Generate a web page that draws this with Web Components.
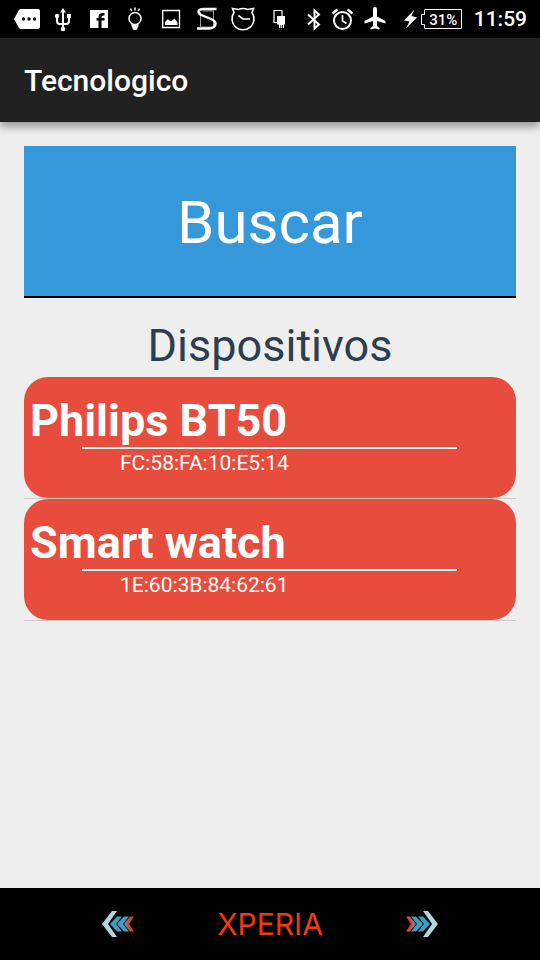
<!DOCTYPE html>
<html lang="es">
<head>
<meta charset="utf-8">
<meta name="viewport" content="width=device-width, initial-scale=1">
<title>Tecnologico</title>
<style>
  body { margin: 0; font-family: Roboto, "Liberation Sans", sans-serif; background: #eeeeee; }
</style>
</head>
<body>
<phone-screen>
  <status-bar slot="status" battery="31%" time="11:59"></status-bar>
  <app-bar slot="header">Tecnologico</app-bar>
  <search-button>Buscar</search-button>
  <device-list heading="Dispositivos">
    <device-card name="Philips BT50" address="FC:58:FA:10:E5:14"></device-card>
    <device-card name="Smart watch" address="1E:60:3B:84:62:61"></device-card>
  </device-list>
  <brand-bar slot="footer">XPERIA</brand-bar>
</phone-screen>

<script>
class BaseElement extends HTMLElement {
  connectedCallback() {
    if (this.shadowRoot) return;
    this.attachShadow({ mode: "open" }).innerHTML = this.render();
  }
}

class PhoneScreen extends BaseElement {
  render() {
    return `
      <style>
        :host { display: flex; flex-direction: column; min-height: 100vh; background: #eeeeee; }
        main { flex: 1; padding: 24px; display: flex; flex-direction: column; gap: 21px; }
      </style>
      <slot name="status"></slot>
      <slot name="header"></slot>
      <main><slot></slot></main>
      <slot name="footer"></slot>`;
  }
}

class StatusBar extends BaseElement {
  render() {
    return `
      <style>
        :host { display: flex; justify-content: space-between; align-items: center; height: 38px;
                background: #000; color: #fff; padding: 0 13px 0 9px; }
        .group { display: flex; align-items: center; }
        svg { display: block; flex: none; fill: none; stroke: #fff; stroke-width: 2; }
        .solid { fill: #fff; stroke: none; }
        .hole { fill: #000; stroke: none; }
        .battery { display: grid; width: 44px; height: 38px; }
        .battery > * { grid-area: 1 / 1; }
        .level { padding-left: 3px; text-align: center; font-size: 15px; line-height: 40px; font-weight: 500; }
        time { font-size: 21px; line-height: 40px; font-weight: 500; padding-left: 10px; }
      </style>
      <div class="group">
        <svg width="36" height="38" viewBox="0 0 36 38" aria-hidden="true">
          <path class="solid" d="M12 9h17q2 0 2 2v16q0 2-2 2H12q-1 0-2-1L5 19l5-9q1-1 2-1z"/>
          <g class="hole"><circle cx="14.5" cy="19" r="1.7"/><circle cx="20" cy="19" r="1.7"/><circle cx="25.5" cy="19" r="1.7"/></g>
        </svg>
        <svg width="36" height="38" viewBox="0 0 36 38" aria-hidden="true">
          <path d="M18 11v17M12 17v4q0 3 3 3h6q3 0 3-3v-4"/>
          <g class="solid"><path d="M18 8l3 4.500h-6zM22 14h4v4h-4z"/><circle cx="12" cy="16" r="2.2"/><circle cx="18" cy="29" r="2.3"/></g>
        </svg>
        <svg width="36" height="38" viewBox="0 0 36 38" aria-hidden="true">
          <path class="solid" d="M9 10h18v18H9z"/>
          <path class="hole" d="M17.500 28v-7.500h-2v-2.500h2v-1q0-4 4-4h2v2.500h-1.500q-1.500 0-1.500 1.500v1h3v2.500h-3V28z"/>
        </svg>
        <svg width="36" height="38" viewBox="0 0 36 38" aria-hidden="true">
          <circle cx="18" cy="18.500" r="6" stroke-width="1.500"/>
          <path class="solid" d="M14.500 24h7v2.500l-1 1v1.500l-1.500 1h-2l-1.500-1v-1.500l-1-1z"/>
          <path stroke-width="1.500" d="M18 7.500v3M13.500 8.500l1.200 2.500M22.500 8.500l-1.200 2.500"/>
        </svg>
        <svg width="36" height="38" viewBox="0 0 36 38" aria-hidden="true">
          <path stroke-width="1.300" d="M9.700 10.500h16.800v17H9.700z"/>
          <path class="solid" d="M12 25v-3l3-3 2 2h1.500l3-2.500 1 1.500 2 2v3z"/>
        </svg>
        <svg width="36" height="38" viewBox="0 0 36 38" aria-hidden="true">
          <path stroke="#999" stroke-width="1" d="M11.500 12v15M24.500 11v16M14 11h11M12 27h13"/>
          <path stroke-width="2.400" d="M27.500 9H15q-5.500 0-5.500 3 0 2 4 3.500l8.500 3.500q4.500 2 4.500 4.500 0 4.500-6 5H8"/>
        </svg>
        <svg width="36" height="38" viewBox="0 0 36 38" aria-hidden="true">
          <path stroke-width="1.600" d="M9 12.500L7.500 8.500 13.500 9.500a11 11 0 0 1 9 0l6-1L27 12.500a11 11 0 1 1-18 0zM13.500 15.500l4.500 3.500h7"/>
        </svg>
        <svg width="36" height="38" viewBox="0 0 36 38" aria-hidden="true">
          <path stroke-width="1.200" d="M16 22.500h-3V10.500h8V16"/>
          <path class="solid" d="M16 16h8v8.500h-1V28h-1v-3h-.8v3h-1v-3h-.8v3h-1.400v-3.500h-2z"/>
        </svg>
      </div>
      <div class="group">
        <svg width="30" height="38" viewBox="0 0 30 38" aria-hidden="true">
          <path stroke-width="2" d="M10 14.500l11 10-4.500 4V10.500l4.500 4-11 10"/>
        </svg>
        <svg width="30" height="38" viewBox="0 0 30 38" aria-hidden="true">
          <circle cx="14.500" cy="20.500" r="8.500"/>
          <path stroke-width="1.700" d="M14.500 15v6l4 2.500"/>
          <path stroke-width="2.300" d="M4.500 13.500L9.500 9.500M24.500 13.500L19.500 9.500"/>
        </svg>
        <svg width="34" height="38" viewBox="0 0 34 38" aria-hidden="true">
          <path class="solid" d="M17 7q-2 0-2 2v7.500L6.500 21v2.500l8.500-2.500v5l-2.500 2v1.500l4.500-1 4.500 1V28L19 26v-5l8.500 2.500V21L19 16.500V9q0-2-2-2z"/>
        </svg>
        <svg width="28" height="38" viewBox="0 0 28 38" aria-hidden="true">
          <path class="solid" d="M22.500 9.500L12 20.500l5.500 1L14 28.500l11-11-5.500-1.500z"/>
        </svg>
        <div class="battery">
          <svg width="44" height="38" viewBox="0 0 44 38" aria-hidden="true">
            <path stroke-width="1" d="M4.500 9.500h37v19h-37v-4h-3v-10h3z"/>
          </svg>
          <span class="level">${this.getAttribute("battery")}</span>
        </div>
        <time>${this.getAttribute("time")}</time>
      </div>`;
  }
}

class AppBar extends BaseElement {
  render() {
    return `
      <style>
        :host { display: flex; align-items: center; height: 84px; padding: 0 24px; background: #212121;
                color: #fff; box-shadow: 0 5px 8px rgba(0, 0, 0, 0.35); }
        h1 { margin: 0; font-size: 30px; line-height: 36px; font-weight: 500; padding-top: 2px; }
      </style>
      <h1><slot></slot></h1>`;
  }
}

class SearchButton extends BaseElement {
  render() {
    return `
      <style>
        :host { display: block; }
        button { display: block; width: 100%; height: 152px; padding: 4px 0 0; border: 0; border-bottom: 2px solid #000;
                 border-radius: 0; background: #3498db; color: #fff; font: 400 60px/72px Roboto, "Liberation Sans", sans-serif; }
      </style>
      <button type="button"><slot></slot></button>`;
  }
}

class DeviceList extends BaseElement {
  render() {
    return `
      <style>
        :host { display: block; }
        h2 { margin: 0 0 5px; text-align: center; color: #2c3e50; font-size: 45px; line-height: 53px; font-weight: 400; }
      </style>
      <h2>${this.getAttribute("heading")}</h2>
      <div role="list"><slot></slot></div>`;
  }
}

class DeviceCard extends BaseElement {
  connectedCallback() {
    this.setAttribute("role", "listitem");
    super.connectedCallback();
  }
  render() {
    return `
      <style>
        :host { display: block; border-bottom: 1px solid #cccccc; }
        article { padding: 17px 0 21px; border-radius: 24px; background: #e74c3c; color: #fff; }
        h3 { margin: 0; padding-left: 6px; font-size: 45px; line-height: 53px; font-weight: 700; }
        hr { margin: 0 59px 0 58px; border: 0; height: 2px; background: #fff; }
        p { margin: 0; padding-left: 96px; font-size: 21px; line-height: 28px; }
      </style>
      <article>
        <h3>${this.getAttribute("name")}</h3>
        <hr>
        <p>${this.getAttribute("address")}</p>
      </article>`;
  }
}

class BrandBar extends BaseElement {
  render() {
    const chevrons = (id) => `
      <defs><linearGradient id="${id}" x1="0" x2="1"><stop offset="0" stop-color="#5a93b0"/><stop offset="0.6" stop-color="#e0402c"/></linearGradient></defs>
      <path fill="#b3d5e0" d="M0 13L10 0h5L6 13l9 13h-5z"/>
      <path fill="#3c9fc4" d="M8 13l7-7.500h5l-6 7.500 6 7.500h-5zM15 13l7-7.500h5l-6 7.500 6 7.500h-5z"/>
      <path fill="url(#${id})" d="M22 13l6-7.500h4l-5 7.500 5 7.500h-4z"/>`;
    return `
      <style>
        :host { display: flex; justify-content: center; align-items: center; height: 72px;
                background: #000; color: #ee3b10; }
        svg { display: block; flex: none; width: 32px; height: 26px; }
        span { width: 272px; text-align: center; font: 400 30px/36px Inter, "Liberation Sans", sans-serif; }
      </style>
      <svg viewBox="0 0 32 26" aria-hidden="true">${chevrons("a")}</svg>
      <span><slot></slot></span>
      <svg viewBox="0 0 32 26" aria-hidden="true"><g transform="matrix(-1 0 0 1 32 0)">${chevrons("b")}</g></svg>`;
  }
}

customElements.define("phone-screen", PhoneScreen);
customElements.define("status-bar", StatusBar);
customElements.define("app-bar", AppBar);
customElements.define("search-button", SearchButton);
customElements.define("device-list", DeviceList);
customElements.define("device-card", DeviceCard);
customElements.define("brand-bar", BrandBar);
</script>
</body>
</html>
